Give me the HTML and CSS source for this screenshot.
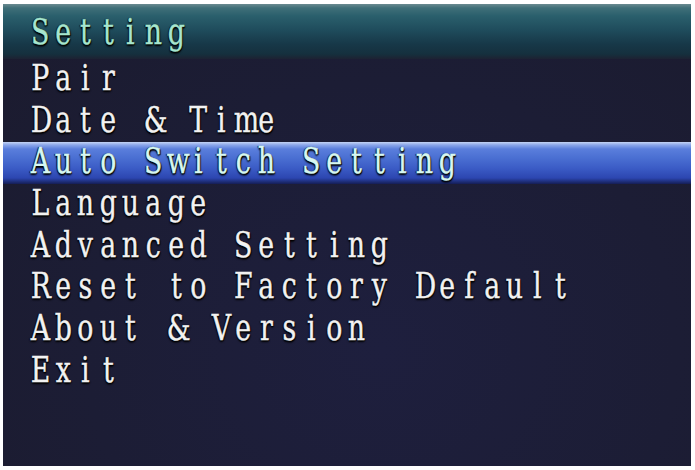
FILE: index.html
```html
<!DOCTYPE html>
<html>
<head>
<meta charset="utf-8">
<link rel="stylesheet" href="styles.css">
</head>
<body>
<div class="screen">
  <div class="header osd">Setting</div>
  <ul class="menu">
    <li class="item osd">Pair</li>
    <li class="item osd">Date &amp; Time</li>
    <li class="item osd selected">Auto Switch Setting</li>
    <li class="item osd">Language</li>
    <li class="item osd">Advanced Setting</li>
    <li class="item osd">Reset to Factory Default</li>
    <li class="item osd">About &amp; Version</li>
    <li class="item osd">Exit</li>
  </ul>
</div>
<script src="script.js"></script>
</body>
</html>
```
FILE: styles.css
```css
html, body {
  margin: 0;
  padding: 0;
  background: #ffffff;
}
body {
  width: 695px;
  height: 470px;
  overflow: hidden;
}
.screen {
  margin: 4px 4px 0 3px;
  height: 462px;
  background: radial-gradient(ellipse at 55% 75%, #1e1f3e 0%, #1c1d35 55%, #1b1b2e 100%);
  font-family: "DejaVu Serif Condensed", "DejaVu Serif", "Liberation Serif", serif;
  font-stretch: condensed;
  font-size: 35px;
  color: #f2f2f2;
  text-shadow: 1px 1px 1px #000, -1px 0 1px #000, 0 2px 2px #000;
  overflow: hidden;
}
.osd {
  white-space: pre;
}
.ch {
  display: inline-block;
  width: 22.6px;
  text-align: center;
  transform: scaleX(0.85);
  -webkit-text-stroke: 0.4px currentColor;
}
.header {
  height: 55px;
  box-sizing: border-box;
  padding: 8px 0 0 26px;
  line-height: 41.7px;
  color: #a6e6cf;
  background: linear-gradient(to bottom, #6a8a90 0px, #3f6f78 4px, #2a5f6c 12px, #1f4c5c 26px, #173848 40px, #15303e 50px, #1d2232 55px);
}
.menu {
  list-style: none;
  margin: 0;
  padding: 0;
}
.item {
  height: 41.7px;
  box-sizing: border-box;
  padding: 0 0 3px 26px;
  line-height: 38.7px;
}
.selected {
  color: #d6f7f2;
  background: linear-gradient(to bottom, #c4d4f4 0px, #8aa6ea 3px, #5a7edc 7px, #4a6fd2 16px, #3b5cc6 26px, #2c46b0 36px, #16205a 41.7px);
}
```
FILE: script.js
```js
document.querySelectorAll('.osd').forEach(function (el) {
  var text = el.textContent;
  el.textContent = '';
  for (var i = 0; i < text.length; i++) {
    var s = document.createElement('span');
    s.className = 'ch';
    s.textContent = text[i];
    el.appendChild(s);
  }
});
```
